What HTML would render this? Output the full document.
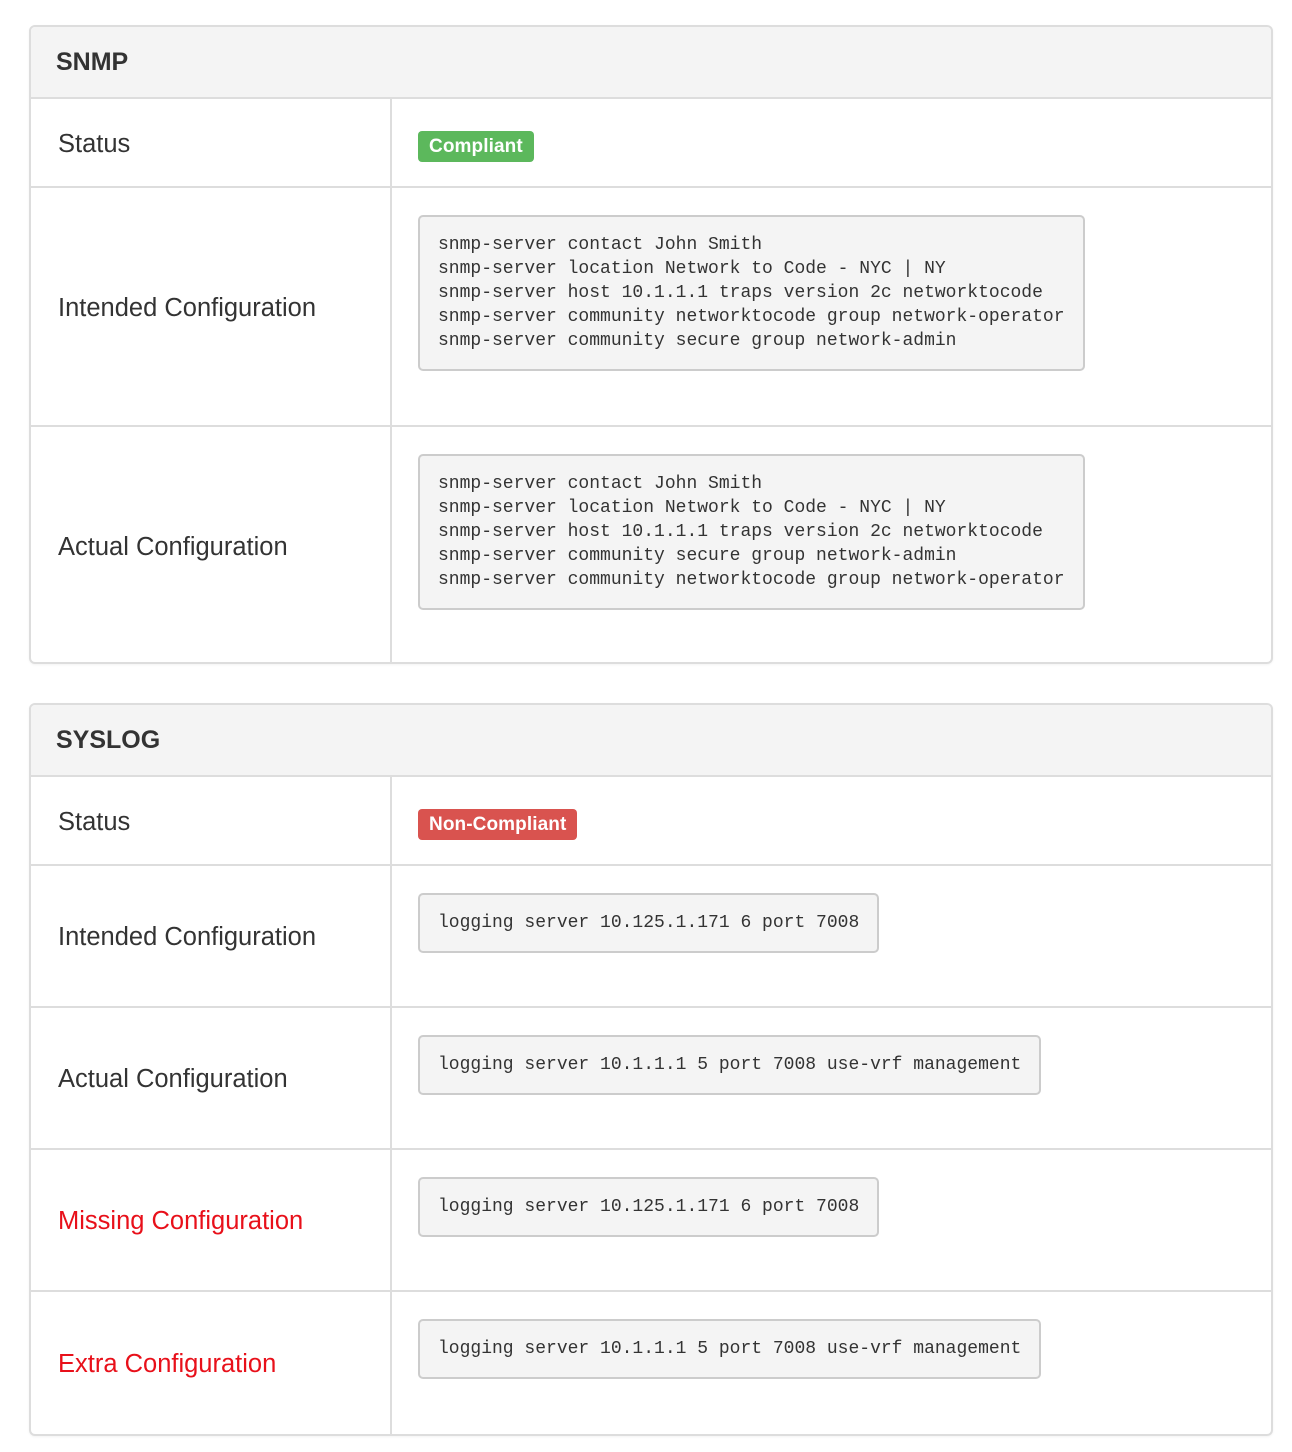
<!DOCTYPE html>
<html><head><style>
body{margin:0;background:#fff;font-family:"Liberation Sans",Arial,sans-serif;color:#333;}
.panel{position:absolute;left:29px;width:1244px;border:2px solid #ddd;border-radius:6px;box-sizing:border-box;background:#fff;box-shadow:0 1px 2px rgba(0,0,0,.05);overflow:hidden}
.hd{height:72px;background:#f4f4f4;border-bottom:2px solid #ddd;box-sizing:border-box;padding-left:25px;line-height:70px;font-weight:bold;font-size:25px;color:#333}
table{border-collapse:collapse;width:100%;table-layout:fixed}
td{border-top:2px solid #ddd;box-sizing:border-box;padding:0}
tr:first-child td{border-top:none}
td.l{width:360px;border-right:2px solid #ddd;padding-left:27px;padding-top:3px;font-size:25.5px;vertical-align:middle}
td.r{vertical-align:top;padding-left:26px}
.red{color:#e8101a}
.badge{display:inline-block;height:31px;line-height:31px;padding:0 11px;border-radius:4px;color:#fff;font-weight:bold;font-size:19px;letter-spacing:0.1px;margin-top:32px}
.g{background:#5cb85c}.rd{background:#d9534f}
pre{display:inline-block;margin:27px 0 0 0;background:#f4f4f4;border:2px solid #ccc;border-radius:5px;padding:16px 18px;font-family:"Liberation Mono",monospace;font-size:18px;line-height:24px;color:#333}
</style></head><body>
<div class="panel" style="top:25px;height:639px">
<div class="hd">SNMP</div>
<table>
<tr style="height:88px"><td class="l">Status</td><td class="r"><span class="badge g">Compliant</span></td></tr>
<tr style="height:239px"><td class="l">Intended Configuration</td><td class="r"><pre>snmp-server contact John Smith
snmp-server location Network to Code - NYC | NY
snmp-server host 10.1.1.1 traps version 2c networktocode
snmp-server community networktocode group network-operator
snmp-server community secure group network-admin</pre></td></tr>
<tr style="height:239px"><td class="l">Actual Configuration</td><td class="r"><pre>snmp-server contact John Smith
snmp-server location Network to Code - NYC | NY
snmp-server host 10.1.1.1 traps version 2c networktocode
snmp-server community secure group network-admin
snmp-server community networktocode group network-operator</pre></td></tr>
</table></div>
<div class="panel" style="top:703px;height:733px">
<div class="hd">SYSLOG</div>
<table>
<tr style="height:88px"><td class="l">Status</td><td class="r"><span class="badge rd">Non-Compliant</span></td></tr>
<tr style="height:142px"><td class="l">Intended Configuration</td><td class="r"><pre>logging server 10.125.1.171 6 port 7008</pre></td></tr>
<tr style="height:142px"><td class="l">Actual Configuration</td><td class="r"><pre>logging server 10.1.1.1 5 port 7008 use-vrf management</pre></td></tr>
<tr style="height:142px"><td class="l red">Missing Configuration</td><td class="r"><pre>logging server 10.125.1.171 6 port 7008</pre></td></tr>
<tr style="height:143px"><td class="l red">Extra Configuration</td><td class="r"><pre>logging server 10.1.1.1 5 port 7008 use-vrf management</pre></td></tr>
</table></div>
</body></html>
